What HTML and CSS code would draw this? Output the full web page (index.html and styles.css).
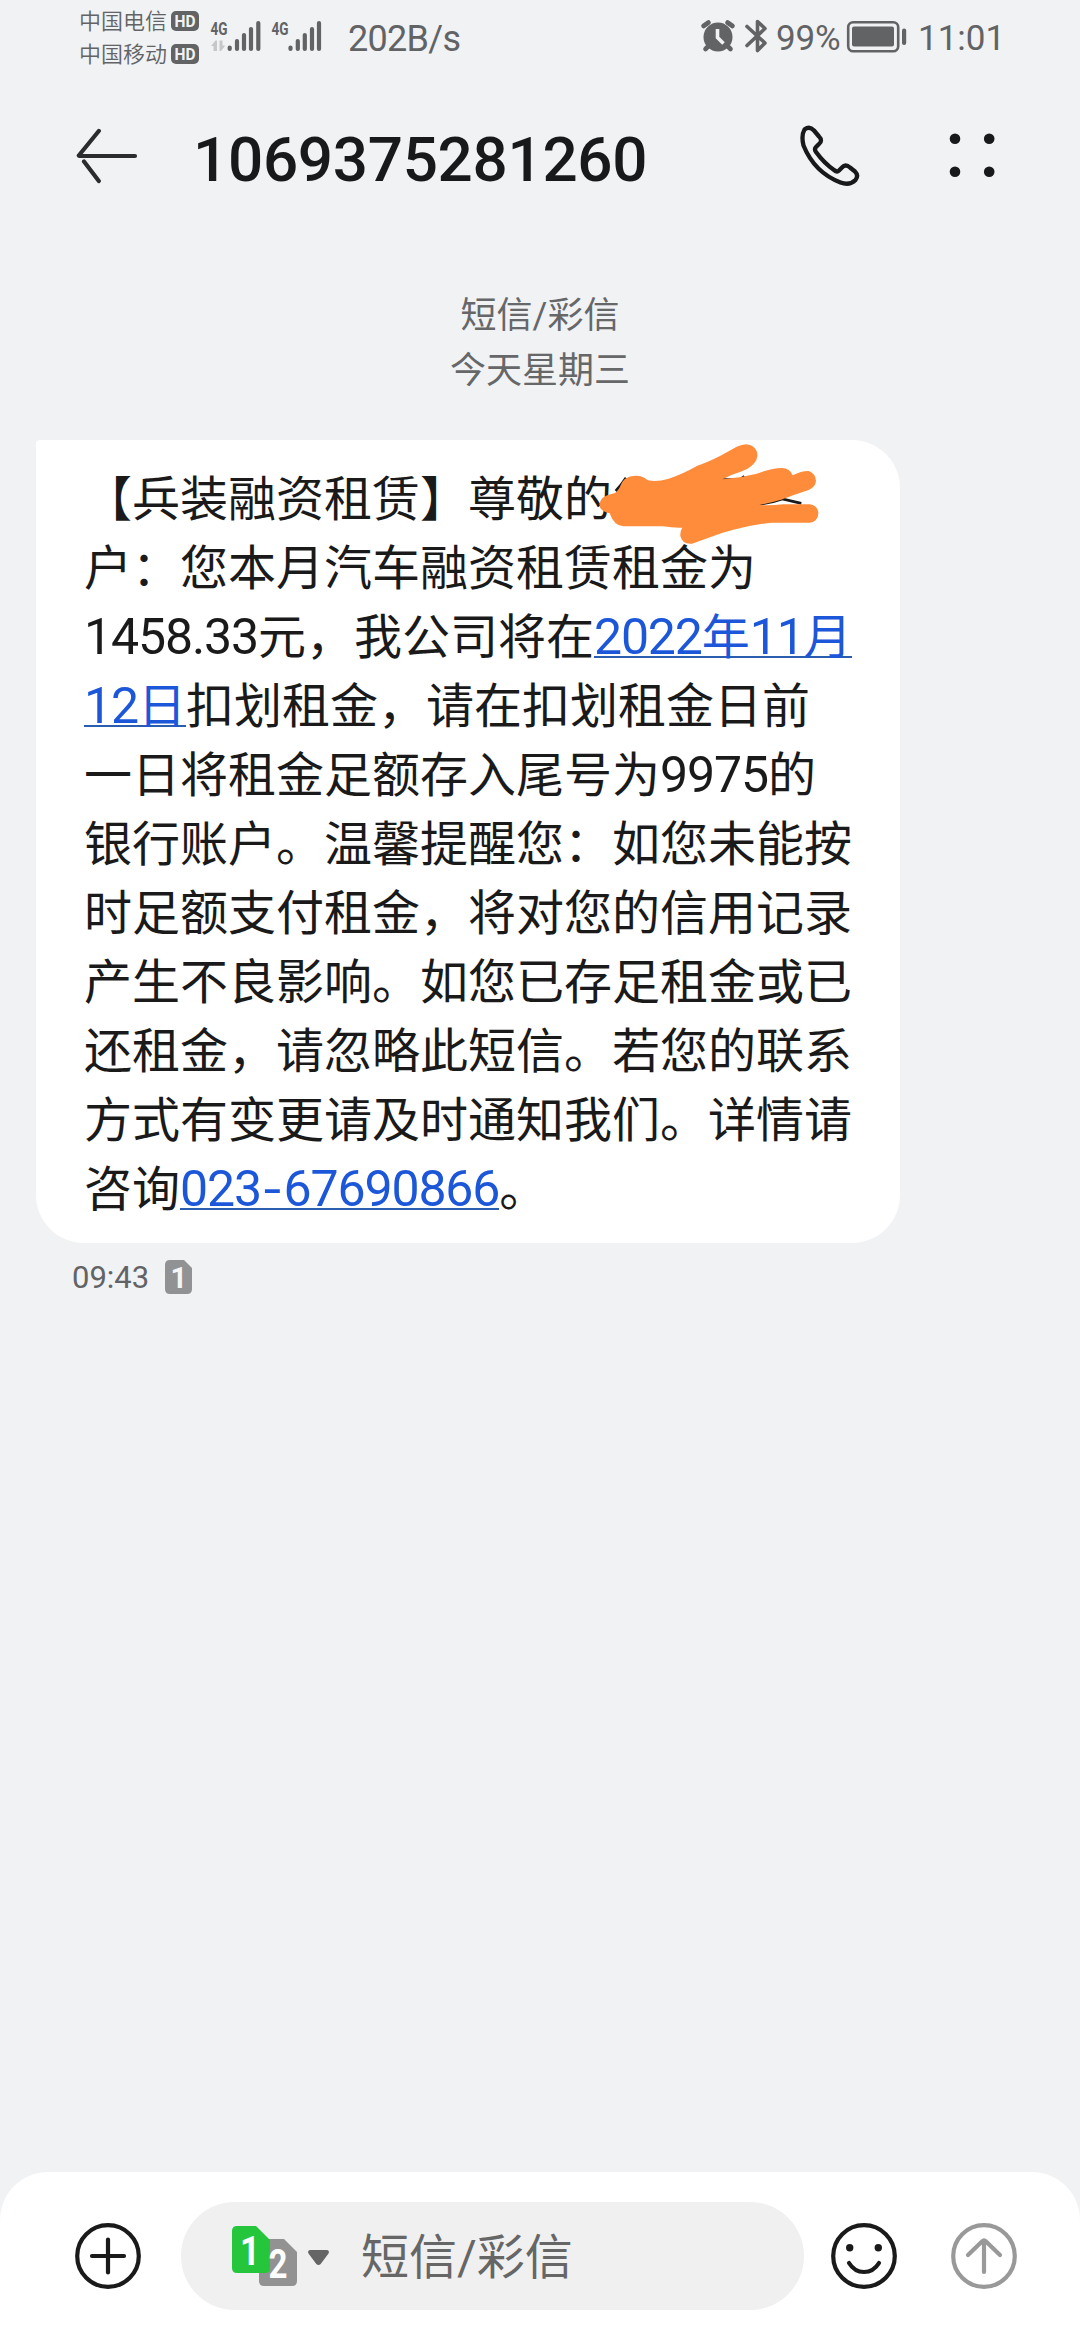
FILE: index.html
```html
<!DOCTYPE html>
<html lang="zh-CN">
<head>
<meta charset="utf-8">
<title>1069375281260</title>
<link rel="stylesheet" href="styles.css">
</head>
<body>
<div class="screen">
  <header class="status">
    <div class="carriers">
      <div class="carrier">中国电信<svg class="hd" viewBox="0 0 28 20"><rect width="28" height="20" rx="5"/><text x="3.5" y="15.6" textLength="21" lengthAdjust="spacingAndGlyphs">HD</text></svg></div>
      <div class="carrier">中国移动<svg class="hd" viewBox="0 0 28 20"><rect width="28" height="20" rx="5"/><text x="3.5" y="15.6" textLength="21" lengthAdjust="spacingAndGlyphs">HD</text></svg></div>
    </div>
    <svg class="signals" viewBox="208 16 116 40">
      <g class="gen"><text x="210.5" y="34.5" textLength="17" lengthAdjust="spacingAndGlyphs">4G</text><text x="271.5" y="34.5" textLength="17" lengthAdjust="spacingAndGlyphs">4G</text></g>
      <path class="traffic" d="M217 51h-3.500v-5H211l4.500-5.500h1.500zM219.500 40.500h3v5h2.800l-4.300 5.500h-1.500z"/>
      <path class="bars" d="M229.700 47.500v1.500M237 41v8M244 35v14M251 29v20M258.300 23v26M290.500 47.500v1.500M297.800 41v8M304.800 35v14M312 29v20M319 23v26"/>
    </svg>
    <span class="speed">202B/s</span>
    <div class="status-right">
      <svg class="alarm" viewBox="700 18 38 36">
        <circle cx="718" cy="37" r="14.500" fill="#626365"/>
        <path class="grey-line" d="M703.500 26l5-3.500M732.500 26l-5-3.500M705.500 49l3-3M730.500 49l-3-3"/>
        <path d="M717.500 29v8.500l6 6" fill="none" stroke="#f1f2f4" stroke-width="3.600"/>
      </svg>
      <svg class="bluetooth" viewBox="744 17 24 38"><path class="grey-line thin" d="M747 26.500l18 16.500-7.500 7.500v-29l7.500 7-18 17"/></svg>
      <span class="percent">99%</span>
      <svg class="battery" viewBox="846 20 62 34"><rect x="848.200" y="22.200" width="50" height="29" rx="5" fill="none" stroke="#626365" stroke-width="2.600"/><rect x="852" y="26.500" width="42" height="20" rx="2" fill="#626365"/><rect x="902" y="28.500" width="4.200" height="16.500" rx="2" fill="#626365"/></svg>
      <span class="clock">11:01</span>
    </div>
  </header>

  <nav class="titlebar">
    <svg class="back" viewBox="76 126 64 60"><path d="M135 156H79.500M98.800 131L78.800 155.500M84 161.500l14.800 19.500" fill="none" stroke="#2b2c2d" stroke-width="4.200" stroke-linecap="round"/></svg>
    <h1>1069375281260</h1>
    <svg class="call" viewBox="796 124 64 64"><path d="M804.500 129.500q5-4 9.500 1l5 6q4 4 0 7.500l-3 3q-2 2 0 5 8 11 18 18 3 2.500 5 .5l3-3q3.500-4 8 0l5 4q4 4 .5 8.500-6 6-15 2.500-26-10-37-37-2.500-10 1-16z" fill="none" stroke="#17191b" stroke-width="4.300" stroke-linejoin="round"/></svg>
    <svg class="more" viewBox="948 132 48 48"><g fill="#17191b"><circle cx="955" cy="138.700" r="5.300"/><circle cx="989.200" cy="138.700" r="5.300"/><circle cx="955" cy="171.700" r="5.300"/><circle cx="989.200" cy="171.700" r="5.300"/></g></svg>
  </nav>

  <main class="thread">
    <div class="stamp"><p>短信/彩信</p><p>今天星期三</p></div>
    <article class="bubble">
      <p>【兵装融资租赁】尊敬的</p>
      <p>户：您本月汽车融资租赁租金为</p>
      <p><span class="num">1458.33</span>元，我公司将在<a><span class="num">2022</span>年<span class="num">11</span>月</a></p>
      <p><a><span class="num">12</span>日</a>扣划租金，请在扣划租金日前</p>
      <p>一日将租金足额存入尾号为<span class="num">9975</span>的</p>
      <p>银行账户。温馨提醒您：如您未能按</p>
      <p>时足额支付租金，将对您的信用记录</p>
      <p>产生不良影响。如您已存足租金或已</p>
      <p>还租金，请忽略此短信。若您的联系</p>
      <p>方式有变更请及时通知我们。详情请</p>
      <p>咨询<a><span class="num">023<span class="dash">-</span>67690866</span></a>。</p>
      <svg class="scribble" viewBox="0 0 750 360">
        <path d="M77 183q16-17 31-40M150 143l14 7M397 149h34M455 145l8-6M505 223q38-4 72-16l57 13" fill="none" stroke="#1a1a1a" stroke-width="8"/>
        <path fill="#ff8c3a" d="M28 224Q32 198 64 192Q84 188 90 170Q100 138 136 137Q156 136 174 151Q200 157 236 146Q276 133 322 107Q350 98 390 78L440 50Q472 35 490 50Q508 66 499 90Q488 112 456 124Q424 134 397 148Q450 144 500 131Q544 115 576 114Q600 115 608 136Q636 122 656 123Q676 130 678 152Q677 170 656 180Q610 195 573 209Q540 219 508 225Q540 227 580 223H660Q685 228 685 251Q683 276 658 278H545Q490 284 430 299Q390 309 356 323L306 341Q277 344 271 318Q270 303 277 293Q248 294 220 289H100Q73 289 59 250Q30 244 28 224Z"/>
      </svg>
    </article>
    <div class="meta"><span class="sent">09:43</span><svg class="sim-tag" viewBox="0 0 28 34"><path d="M5 0h14l8 8v21q0 5-5 5H5q-5 0-5-5V5q0-5 5-5z" fill="#919294"/><text x="5.500" y="28">1</text></svg></div>
  </main>

  <footer class="composer">
    <svg class="round-icon" viewBox="0 0 66 66"><circle cx="33" cy="33" r="30.800"/><path d="M33 16.500v33M17 33h32"/></svg>
    <div class="field">
      <svg class="sims" viewBox="230 2225 102 63">
        <path d="M264 2239h20l13 13v29q0 5-5 5h-28q-5 0-5-5v-37q0-5 5-5z" fill="#929292"/>
        <path d="M237 2226h19l14 14v28q0 5-5 5h-28q-5 0-5-5v-37q0-5 5-5z" fill="#26c63c"/>
        <text x="240" y="2265" textLength="20" lengthAdjust="spacingAndGlyphs">1</text><text x="268.500" y="2278" textLength="19" lengthAdjust="spacingAndGlyphs">2</text>
        <path d="M310 2250h17q3 1 1.500 3.500l-7.800 10.500q-2.200 2-4.400 0l-7.800-10.500q-1.500-2.500 1.500-3.500z" fill="#656565"/>
      </svg>
      <span class="hint">短信/彩信</span>
    </div>
    <svg class="round-icon smile" viewBox="0 0 66 66"><circle cx="33" cy="33" r="30.800"/><path d="M18 40q5.500 9 15 9t15-9"/><circle class="eye" cx="18.700" cy="24.700" r="3.700"/><circle class="eye" cx="47.300" cy="24.700" r="3.700"/></svg>
    <svg class="round-icon send" viewBox="0 0 66 66"><circle cx="33" cy="33" r="30.800"/><path d="M33 49V17.500M17 32l14-13.500q2-2 4 0L49 32"/></svg>
  </footer>
</div>
</body>
</html>
```
FILE: styles.css
```css
* { box-sizing: border-box; margin: 0; padding: 0; }
body {
  background: #f1f2f4;
  color: #1a1a1a;
  font-family: Roboto, "Noto Sans CJK SC", sans-serif;
  text-spacing-trim: space-all;
}
.screen { width: 1080px; height: 2340px; display: flex; flex-direction: column; overflow: hidden; }
svg { display: block; flex: none; }
p, span, h1 { white-space: nowrap; }

.status { height: 76px; padding: 3px 82px 0 79px; display: flex; align-items: flex-start; color: #626365; }
.carriers { width: 129px; }
.carrier { height: 33px; display: flex; align-items: center; font: 350 22px/33px "Noto Sans CJK SC", sans-serif; }
.hd { width: 28px; height: 20px; margin: 2px 0 0 4px; fill: #626365; }
.hd text { font: bold 16px Roboto, sans-serif; fill: #f1f2f4; }
.signals { width: 116px; height: 40px; margin-top: 13px; }
.gen text { font: bold 18px Roboto, sans-serif; fill: #626365; }
.bars { fill: none; stroke: #626365; stroke-width: 4.200; stroke-linecap: round; }
.traffic { fill: #c6c7c9; }
.speed { margin: 14px 0 0 24px; font-size: 36px; line-height: 44px; letter-spacing: -.7px; }
.status-right { margin-left: auto; display: flex; align-items: flex-start; }
.alarm { width: 38px; height: 36px; margin-top: 15px; }
.grey-line { fill: none; stroke: #626365; stroke-width: 4.600; stroke-linecap: round; stroke-linejoin: round; }
.thin { stroke-width: 3.600; }
.bluetooth { width: 24px; height: 38px; margin: 14px 0 0 6px; }
.percent { width: 70px; margin: 14px 0 0 8px; font-size: 35px; line-height: 44px; letter-spacing: -.2px; }
.battery { width: 62px; height: 34px; margin-top: 17px; }
.clock { width: 80px; margin: 14px 0 0 10px; font-size: 35px; line-height: 44px; letter-spacing: 0; }

.titlebar { height: 160px; padding: 0 84px 0 76px; display: flex; align-items: center; }
.back { width: 64px; height: 60px; }
h1 { margin: 8px 0 0 53px; font-size: 62px; font-weight: 500; line-height: 80px; letter-spacing: -.3px; color: #17191b; }
.call { width: 64px; height: 64px; margin-left: auto; }
.more { width: 48px; height: 48px; margin-left: 88px; }

.thread { flex: 1; padding: 53px 36px 0; }
.stamp { height: 151px; text-align: center; font-size: 36px; line-height: 55px; color: #666769; }
.bubble { position: relative; width: 864px; height: 803px; padding: 25px 48px 19px; background: #fff; border-radius: 4px 48px 48px 48px; font-size: 48px; line-height: 69px; }
.bubble p { height: 69px; }
.num { font-size: 50px; letter-spacing: -1.130px; line-height: 1px; }
.dash { display: inline-block; width: 22.600px; text-align: center; letter-spacing: 0; transform: scaleX(1.25); }
.bubble a { color: #1c57d9; background: linear-gradient(#2a5cb0, #2a5cb0) 0 calc(100% - 8px) / 100% 2px no-repeat; }
.scribble { position: absolute; left: 554px; top: -10px; width: 250px; height: 120px; }
.meta { display: flex; align-items: center; padding: 12px 0 0 36px; height: 56px; }
.sent { width: 93px; font-size: 31px; letter-spacing: 0; color: #626365; }
.sim-tag { width: 28px; height: 34px; }
.sim-tag text { font: bold 29px Roboto, sans-serif; fill: #f5f5f6; }

.composer { height: 168px; padding: 30px 63px 30px 75px; display: flex; align-items: center; background: #fff; border-radius: 48px 48px 0 0; }
.round-icon { width: 66px; height: 66px; fill: none; stroke: #1a1a1a; stroke-width: 4.200; stroke-linecap: round; }
.eye { fill: #1a1a1a; stroke: none; }
.field { width: 623px; height: 108px; margin: 0 27px 0 40px; padding-left: 49px; border-radius: 54px; background: #f0f0f0; display: flex; align-items: center; }
.sims { width: 102px; height: 63px; }
.sims text { font: bold 40px Roboto, sans-serif; fill: #fff; }
.hint { margin: 4px 0 0 29px; font-size: 48px; line-height: 64px; color: #666; }
.send { margin-left: 54px; stroke: #999; }
```
